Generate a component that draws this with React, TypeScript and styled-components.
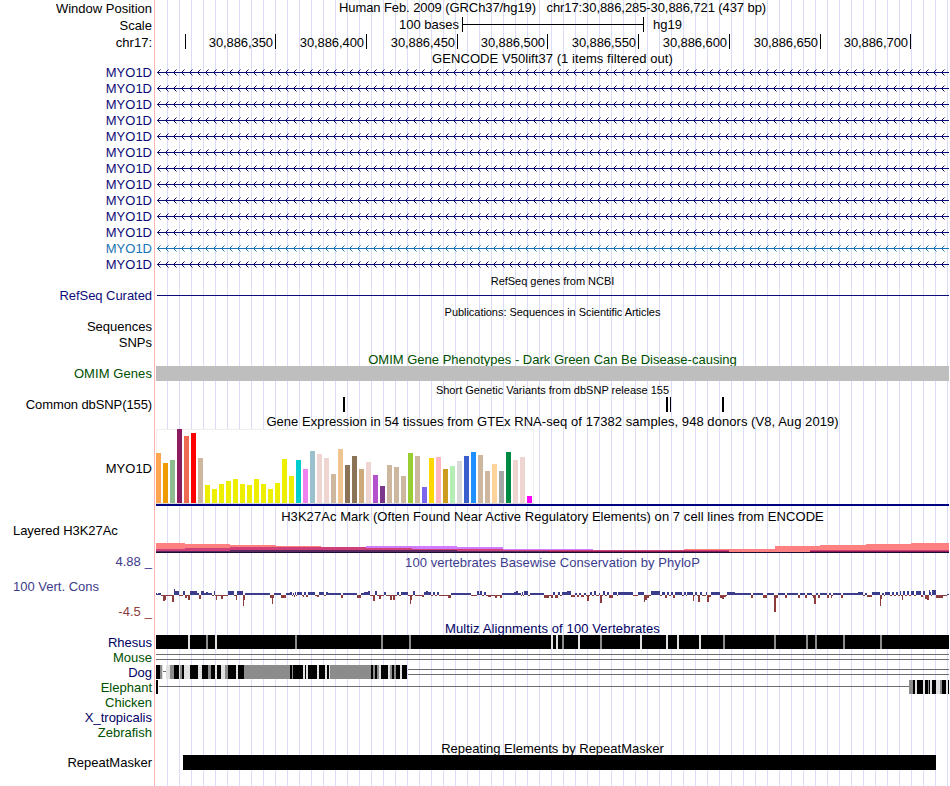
import React from 'react';
import styled, { createGlobalStyle } from 'styled-components';

const NAVY = '#0c0c78';
const GREEN = '#005000';
const CONS_UP = '#3c3c8c';
const CONS_DOWN = '#8c3c3c';
const SPECIES_BLUE = '#000064';
const PLOT_WIDTH = 793;

const GlobalStyle = createGlobalStyle`
  html, body {
    margin: 0;
    padding: 0;
    background: #fff;
  }
`;

const Browser = styled.main`
  display: flex;
  flex-direction: column;
  width: 949px;
  height: 786px;
  overflow: hidden;
  color: #000;
  font-family: 'Liberation Sans', Arial, Helvetica, sans-serif;
  font-size: 13px;
  line-height: 15px;
  white-space: pre;
`;

const TrackRow = styled.section<{ $h?: number }>`
  display: grid;
  grid-template-columns: 154px 2px ${PLOT_WIDTH}px;
  ${(p) => (p.$h ? `height: ${p.$h}px; flex: none;` : 'flex: 1;')}
`;

const LabelCell = styled.div<{ $color?: string; $drop?: number; $start?: boolean; $track?: number }>`
  display: flex;
  justify-content: ${(p) => (p.$start ? 'flex-start' : 'flex-end')};
  align-items: flex-start;
  height: 0;
  margin-top: ${(p) => p.$drop ?? 1}px;
  padding: 0 ${(p) => (p.$start ? 0 : 2)}px 0 ${(p) => (p.$start ? 13 : 0)}px;
  color: ${(p) => p.$color ?? '#000'};
  letter-spacing: ${(p) => p.$track ?? 0}px;
`;

const Guide = styled.div`
  border-left: 1px solid #ffb4b4;
`;

const Plot = styled.div`
  min-width: 0;
  background-image: linear-gradient(to right, transparent 11px, #dcdcf8 11px);
  background-size: 12px 100%;
`;

const Title = styled.h2<{ $color?: string; $drop?: number; $small?: boolean; $track?: number }>`
  display: flex;
  justify-content: center;
  height: 0;
  margin: 0;
  padding-top: ${(p) => p.$drop ?? 0}px;
  color: ${(p) => p.$color ?? '#000'};
  font-size: ${(p) => (p.$small ? 11 : 13)}px;
  font-weight: 400;
  line-height: ${(p) => (p.$small ? 12 : 15)}px;
  letter-spacing: ${(p) => p.$track ?? 0}px;
`;

const ScaleLine = styled.div`
  display: flex;
  align-items: flex-start;
`;

const ScaleText = styled.span<{ $w?: number }>`
  width: ${(p) => (p.$w ? `${p.$w}px` : 'auto')};
  text-align: right;
`;

const ScaleBar = styled.div`
  display: flex;
  align-items: center;
  box-sizing: border-box;
  width: 182px;
  height: 15px;
  margin: 0 9px 0 3px;
  border: solid #000;
  border-width: 0 1px;

  &::before {
    content: '';
    width: 100%;
    height: 1px;
    background: #000;
  }
`;

const Ruler = styled.div`
  display: grid;
  grid-template-columns: 30px 90px 91px 91px 90px 91px 91px 91px 90px;
`;

const RulerTick = styled.span`
  height: 15px;
  padding-right: 2px;
  border-right: 1px solid #000;
  text-align: right;
  letter-spacing: -0.08px;
  line-height: 17px;
`;

const Band = styled.div<{ $color: string; $left?: number; $width?: number }>`
  width: ${(p) => (p.$width ? `${p.$width}px` : '100%')};
  height: 15px;
  margin-left: ${(p) => p.$left ?? 0}px;
  background: ${(p) => p.$color};
`;

const Drawing = styled.svg`
  display: block;
  shape-rendering: crispEdges;
`;

const Limit = styled.span`
  padding-right: 4px;
`;

type TrackProps = {
  h?: number;
  label?: React.ReactNode;
  color?: string;
  drop?: number;
  start?: boolean;
  track?: number;
  children?: React.ReactNode;
};

function Track({ h, label, color, drop, start, track, children }: TrackProps) {
  return (
    <TrackRow $h={h}>
      <LabelCell $color={color} $drop={drop} $start={start} $track={track}>{label}</LabelCell>
      <Guide />
      <Plot>{children}</Plot>
    </TrackRow>
  );
}

function GeneLine({ color }: { color: string }) {
  const arrows = Array.from({ length: 99 }, (_, i) => `M${4.5 + i * 8} 5.5L${1.5 + i * 8} 8.5L${4.5 + i * 8} 11.5`).join('');
  return (
    <Drawing width={PLOT_WIDTH} height={16}>
      <path d={arrows} fill="none" stroke={color} strokeWidth={1} shapeRendering="auto" />
      <rect x={1} y={8} width={PLOT_WIDTH - 1} height={1} fill={color} />
    </Drawing>
  );
}

const SNPS = [[187, 2], [510, 2], [514, 1], [566, 2]];

const YELLOW = '#eeee00';
const TAN = '#cdb79e';
const ROSE = '#eed5d2';
const TISSUES: [number, string][] = [
  [50, '#ffa54f'], [40, '#ee9a00'], [43, '#8fbc8f'], [74, '#8b1c62'], [67, '#ee6a50'], [70, '#ff0000'], [45, TAN],
  [18, YELLOW], [14, YELLOW], [19, YELLOW], [22, YELLOW], [24, YELLOW], [19, YELLOW], [18, YELLOW], [24, YELLOW],
  [19, YELLOW], [14, YELLOW], [20, YELLOW], [44, YELLOW], [27, YELLOW], [43, '#00cdcd'], [34, '#ee82ee'],
  [52, '#9ac0cd'], [49, ROSE], [45, ROSE], [29, TAN], [54, '#eec591'], [38, '#8b7355'], [47, '#8b7355'],
  [34, '#cdaa7d'], [41, ROSE], [28, '#b452cd'], [17, '#7a378b'], [38, TAN], [36, TAN], [27, TAN], [50, '#9acd32'],
  [47, TAN], [16, '#7a67ee'], [45, '#ffd700'], [46, '#ffb6c1'], [34, '#cd9b1d'], [37, '#b4eeb4'], [42, '#d9d9d9'],
  [47, '#3a5fcd'], [51, '#1e90ff'], [48, TAN], [32, TAN], [39, '#ffd39b'], [32, '#a6a6a6'], [51, '#008b45'],
  [43, ROSE], [46, ROSE], [7, '#ff00ff'],
];

function ExpressionChart() {
  return (
    <Drawing width={PLOT_WIDTH} height={77}>
      <rect x={0} y={0} width={378} height={75} fill="#eeeeee" />
      <rect x={1} y={1} width={376} height={73} fill="#ffffff" />
      <rect x={0} y={74} width={378} height={1} fill="#d8d8d8" />
      {TISSUES.map(([height, fill], i) => (
        <rect key={i} x={i * 7} y={74 - height} width={5} height={height} fill={fill} />
      ))}
      <rect x={0} y={75} width={PLOT_WIDTH} height={2} fill="#000080" />
    </Drawing>
  );
}

// Each layer lists [left, right, height above the floor].
const H3K_LAYERS: { fill: string; steps: number[][] }[] = [
  {
    fill: '#ff8080',
    steps: [
      [0, 29, 10], [29, 74, 9], [74, 120, 8], [120, 165, 7], [165, 210, 6], [528, 619, 4],
      [619, 664, 7], [664, 710, 8], [710, 755, 9], [755, 793, 10],
    ],
  },
  { fill: '#cf7cff', steps: [[210, 301, 7], [301, 347, 6], [347, 437, 4]] },
  {
    fill: '#d04078',
    steps: [[0, 29, 4], [29, 74, 5], [74, 210, 6], [210, 256, 5], [256, 347, 4], [347, 573, 3], [654, 793, 3]],
  },
  { fill: '#5a2860', steps: [[0, 74, 2], [74, 301, 3], [301, 392, 2]] },
  { fill: '#8c1c50', steps: [[392, 573, 2], [654, 793, 2]] },
  { fill: '#1c0c38', steps: [[0, 793, 1]] },
];

function AcetylationChart() {
  return (
    <Drawing width={PLOT_WIDTH} height={30}>
      {H3K_LAYERS.map((layer) =>
        layer.steps.map(([left, right, height]) => (
          <rect key={`${layer.fill}${left}`} x={left} y={30 - height} width={right - left} height={height} fill={layer.fill} />
        )),
      )}
    </Drawing>
  );
}

// Consecutive [width, score] runs, left to right.
const CONSERVATION: number[][] = [
  [1,2],[1,1],[3,2],[2,-1],[2,-6],[1,-5],[6,-1],[2,-7],[1,6],[4,4],[4,-1],[2,4],[2,-3],[1,-1],[2,-5],[7,4],[2,2],[2,-4],
  [3,4],[2,2],[2,3],[4,2],[2,-1],[1,4],[1,-1],[1,-5],[4,-1],[2,-4],[5,-1],[6,4],[2,-1],[1,-5],[6,4],[1,-11],[1,-5],[25,2],
  [2,-3],[1,-9],[1,-3],[7,2],[5,-3],[4,2],[2,3],[1,-1],[1,2],[1,-2],[1,3],[1,-1],[5,3],[1,-1],[1,-2],[2,3],[2,-2],[7,3],
  [2,-1],[2,-2],[5,3],[2,-1],[2,3],[13,2],[2,-3],[14,2],[4,-3],[3,2],[4,3],[2,4],[3,-1],[2,-6],[2,4],[2,-1],[2,-4],[3,-1],
  [2,3],[4,-1],[2,-5],[1,-1],[2,-5],[2,-1],[2,3],[2,-1],[7,3],[2,-1],
  [1,-9],[1,-5],[1,-1],[2,4],[7,-1],[2,-2],[2,3],[2,4],[3,3],[2,-1],[2,3],[2,-1],[2,3],[9,-1],[3,-3],[20,2],[6,-1],[2,4],
  [1,1],[2,4],[2,-1],[2,3],[2,-1],[3,-2],[4,-1],[2,-3],[3,-1],[2,-3],[12,2],[2,3],[2,4],[3,2],[1,-1],[1,3],[1,-1],[4,4],
  [2,-1],[14,2],[5,-3],[2,-1],[2,-3],[2,3],[3,-3],[2,3],[2,-1],[5,3],[4,4],[4,-2],[2,2],[2,-2],[2,2],[3,-2],[2,2],[1,-1],
  [2,-6],[1,-1],[2,3],[2,-1],[2,4],[3,-1],[1,2],[2,-8],[1,-1],[2,4],[2,-1],[2,3],[4,-3],[4,3],[1,-1],[15,3],[5,-1],[6,3],
  [1,-7],[2,-5],[2,-3],[2,-1],[9,4],[2,-1],[3,3],[2,-3],[2,3],[2,-1],[2,3],[2,-3],[5,3],
  [2,3],[2,-1],[2,3],[1,-1],[6,3],[1,-6],[1,-1],[2,3],[1,-1],[2,-7],[2,3],[4,-1],[1,3],[2,-7],[2,-2],[9,3],[2,-3],[2,-4],
  [2,-2],[1,-1],[8,3],[16,2],[2,-3],[10,2],[4,-3],[7,2],[2,-17],[2,-3],[7,2],[2,-3],[11,2],[2,-3],[5,2],[2,-3],[5,2],
  [1,-1],[1,-3],[2,-9],[2,2],[2,-3],[7,2],[2,-3],[2,2],[1,-3],[1,-1],[8,2],[2,-3],[15,2],[5,3],[2,-1],[2,2],[5,-2],[8,3],
  [1,-11],[1,-4],[2,2],[1,-1],[5,3],[2,-1],[2,3],[2,-1],[2,3],[2,-1],[1,4],[1,-1],[1,-5],[2,4],[2,-1],[2,4],[2,-1],[3,4],
  [2,-1],[5,4],[2,-2],[2,4],[2,-4],[2,-5],[1,5],[1,3],[1,-1],[4,5],[7,-3],[4,-1],[2,1],
];

function ConservationChart() {
  let x = 0;
  return (
    <Drawing width={PLOT_WIDTH} height={36}>
      {CONSERVATION.map(([width, score], i) => {
        const left = x;
        x += width;
        return (
          <rect
            key={i}
            x={left}
            y={score > 0 ? 15 - score : 15}
            width={width}
            height={Math.abs(score)}
            fill={score > 0 ? CONS_UP : CONS_DOWN}
          />
        );
      })}
    </Drawing>
  );
}

const SHADES: Record<string, string> = { k: '#000000', g: '#8c8c8c', l: '#e1e1e1' };

const RHESUS: [number, string][] = [
  [32, 'l'], [50, 'g'], [59, 'l'], [139, 'g'], [225, 'g'], [253, 'g'], [395, 'l'], [400, 'l'], [406, 'g'], [422, 'l'],
  [444, 'g'], [484, 'l'], [510, 'l'], [521, 'l'], [543, 'l'], [567, 'g'], [618, 'g'], [650, 'g'], [659, 'g'], [687, 'g'],
  [724, 'g'],
];

// Run-length strings: a width followed by its shade; "x" leaves a gap.
const DOG = '4k2g1l3x4l4g5k1l2g2k6l8k4l6k3g4k2l4k4l3g8k2l6k46g2k1g10k2l1k2l9k2l6k2l2k1l41g2k2g2k2g2l7k2l2g2k2g4k2l5k';
const ELEPHANT = '4g2k2l6k2l3k1g1k2l4k4l2g4k2l1k';

function AlignmentRuns({ code, start }: { code: string; start: number }) {
  let x = start;
  const runs = code.match(/\d+[a-z]/g) ?? [];
  return (
    <>
      {runs.map((run, i) => {
        const width = parseInt(run, 10);
        const shade = run.slice(-1);
        const left = x;
        x += width;
        return shade === 'x' ? null : <rect key={i} x={left} y={0} width={width} height={14} fill={SHADES[shade]} />;
      })}
    </>
  );
}

function ChainLine({ x = 0, y, width }: { x?: number; y: number; width: number }) {
  return <rect x={x} y={y} width={width} height={1} fill="#6e6e6e" />;
}

export default function App() {
  const positions = ['', '30,886,350', '30,886,400', '30,886,450', '30,886,500', '30,886,550', '30,886,600', '30,886,650', '30,886,700'];
  return (
    <>
      <GlobalStyle />
      <Browser>
        <Track h={17} label="Window Position">
          <Title $track={-0.085}>Human Feb. 2009 (GRCh37/hg19)   chr17:30,886,285-30,886,721 (437 bp)</Title>
        </Track>
        <Track h={17} label="Scale">
          <ScaleLine>
            <ScaleText $w={303}>100 bases</ScaleText>
            <ScaleBar />
            <ScaleText>hg19</ScaleText>
          </ScaleLine>
        </Track>
        <Track h={16} label="chr17:">
          <Ruler>
            {positions.map((position) => <RulerTick key={position}>{position}</RulerTick>)}
          </Ruler>
        </Track>
        <Track h={14}>
          <Title $drop={1} $track={0.06}>GENCODE V50lift37 (1 items filtered out)</Title>
        </Track>
        {Array.from({ length: 13 }, (_, i) => {
          const color = i === 11 ? '#1874b4' : NAVY;
          return (
            <Track key={i} h={16} label="MYO1D" color={color}>
              <GeneLine color={color} />
            </Track>
          );
        })}
        <Track h={15}>
          <Title $small $drop={3} $track={-0.03}>RefSeq genes from NCBI</Title>
        </Track>
        <Track h={16} label="RefSeq Curated" color={NAVY} track={-0.05}>
          <Drawing width={PLOT_WIDTH} height={16}>
            <rect x={1} y={8} width={792} height={1} fill={NAVY} />
          </Drawing>
        </Track>
        <Track h={15}>
          <Title $small $drop={3} $track={-0.04}>Publications: Sequences in Scientific Articles</Title>
        </Track>
        <Track h={16} label="Sequences" />
        <Track h={16} label="SNPs" />
        <Track h={16}>
          <Title $color={GREEN} $drop={2}>OMIM Gene Phenotypes - Dark Green Can Be Disease-causing</Title>
        </Track>
        <Track h={15} label="OMIM Genes" color={GREEN} drop={0} track={0.08}>
          <Band $color="#bebebe" />
        </Track>
        <Track h={16}>
          <Title $small $drop={3}>Short Genetic Variants from dbSNP release 155</Title>
        </Track>
        <Track h={15} label="Common dbSNP(155)" drop={0} track={-0.1}>
          <Drawing width={PLOT_WIDTH} height={15}>
            {SNPS.map(([x, width]) => <rect key={x} x={x} y={0} width={width} height={15} fill="#000" />)}
          </Drawing>
        </Track>
        <Track h={17}>
          <Title $drop={2} $track={0.055}>Gene Expression in 54 tissues from GTEx RNA-seq of 17382 samples, 948 donors (V8, Aug 2019)</Title>
        </Track>
        <Track h={77} label="MYO1D" drop={32}>
          <ExpressionChart />
        </Track>
        <Track h={17}>
          <Title $drop={3} $track={0.06}>H3K27Ac Mark (Often Found Near Active Regulatory Elements) on 7 cell lines from ENCODE</Title>
        </Track>
        <Track h={30} label="Layered H3K27Ac" drop={0} start track={-0.05}>
          <AcetylationChart />
        </Track>
        <Track h={27} label={<><Limit>4.88</Limit>_</>} color={CONS_UP} drop={1}>
          <Title $color={CONS_UP} $drop={2} $track={0.06}>100 vertebrates Basewise Conservation by PhyloP</Title>
        </Track>
        <Track h={24} label="100 Vert. Cons" color={CONS_UP} drop={-1} start>
          <ConservationChart />
        </Track>
        <Track h={17} label={<><Limit>-4.5</Limit>_</>} color={CONS_DOWN} drop={0} />
        <Track h={14}>
          <Title $color={SPECIES_BLUE} $track={0.11}>Multiz Alignments of 100 Vertebrates</Title>
        </Track>
        <Track h={15} label="Rhesus" color={SPECIES_BLUE} drop={0}>
          <Drawing width={PLOT_WIDTH} height={14}>
            <rect x={0} y={0} width={PLOT_WIDTH} height={14} fill="#000" />
            {RHESUS.map(([x, shade]) => <rect key={x} x={x} y={0} width={2} height={14} fill={SHADES[shade]} />)}
          </Drawing>
        </Track>
        <Track h={15} label="Mouse" color={GREEN} drop={0}>
          <Drawing width={PLOT_WIDTH} height={14}>
            <ChainLine y={4} width={PLOT_WIDTH} />
            <ChainLine y={9} width={PLOT_WIDTH} />
          </Drawing>
        </Track>
        <Track h={15} label="Dog" color={SPECIES_BLUE} drop={0}>
          <Drawing width={PLOT_WIDTH} height={14}>
            <ChainLine x={7} y={6} width={3} />
            <AlignmentRuns code={DOG} start={0} />
            <ChainLine x={252} y={4} width={541} />
            <ChainLine x={252} y={9} width={541} />
          </Drawing>
        </Track>
        <Track h={15} label="Elephant" color={GREEN} drop={0}>
          <Drawing width={PLOT_WIDTH} height={14}>
            <rect x={0} y={0} width={2} height={14} fill="#000" />
            <ChainLine x={3} y={6} width={750} />
            <AlignmentRuns code={ELEPHANT} start={753} />
          </Drawing>
        </Track>
        <Track h={15} label="Chicken" color={GREEN} drop={0} />
        <Track h={15} label="X_tropicalis" color={SPECIES_BLUE} drop={0} />
        <Track h={15} label="Zebrafish" color={GREEN} drop={0} />
        <Track h={15}>
          <Title $drop={1}>Repeating Elements by RepeatMasker</Title>
        </Track>
        <Track h={15} label="RepeatMasker" drop={0}>
          <Band $color="#000" $left={27} $width={753} />
        </Track>
        <Track />
      </Browser>
    </>
  );
}
